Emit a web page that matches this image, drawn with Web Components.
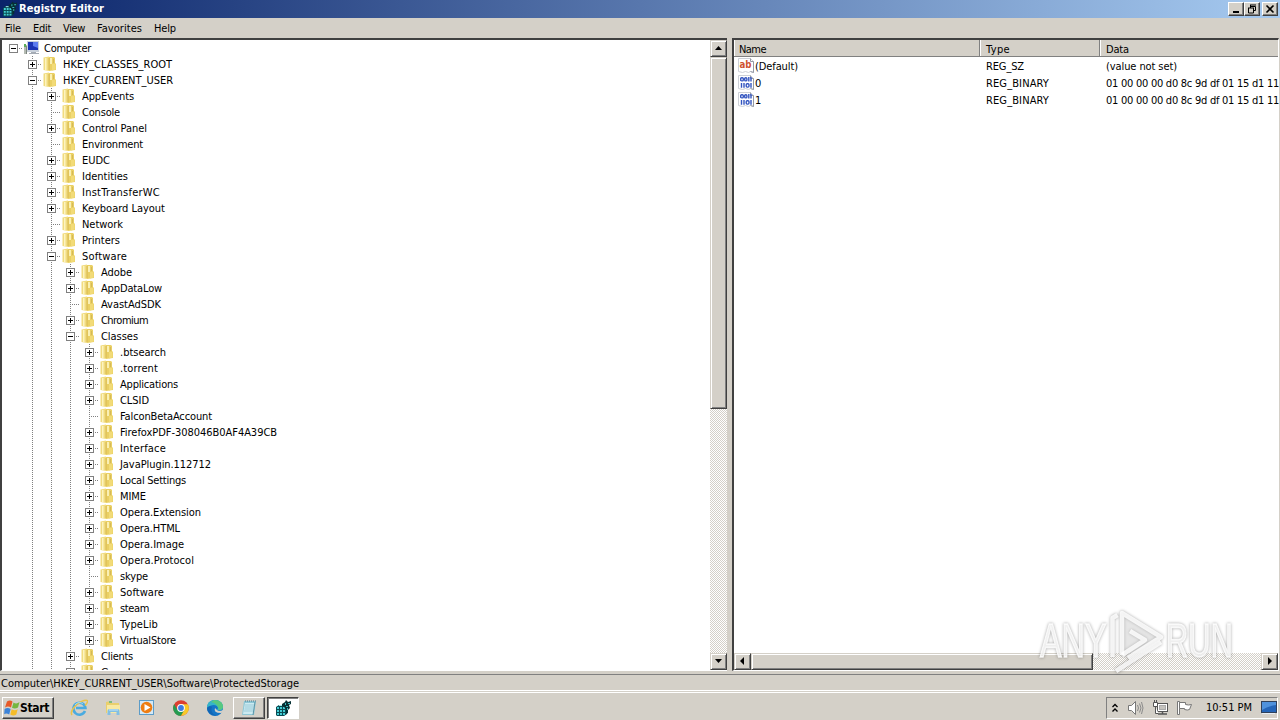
<!DOCTYPE html>
<html lang="en">
<head>
<meta charset="utf-8">
<title>Registry Editor</title>
<style>
  html, body { margin: 0; height: 100%; overflow: hidden; }
  body {
    --face: #d4d0c8;
    --shadow: #808080;
    --dark: #404040;
    background: #d4d0c8;
    color: #000;
    font: 11px/16px "DejaVu Sans Condensed", "DejaVu Sans", sans-serif;
    font-stretch: condensed;
    cursor: default;
  }
</style>
</head>
<body>
<reg-desktop></reg-desktop>

<script>
(function() {

const FOLDER = `<svg width="16" height="16" viewBox="0 0 16 16"><path d="M1.500 1.500L7 .5v14.500l-5.500-1z" fill="#f1dc80"/><path d="M3 2h1.500v12H3z" fill="#fdf4c0"/><path d="M7 1h5l1 1v5l1 1v6l-7 1z" fill="#ead064"/><path d="M8 2h2v6H8z" fill="#faf0b4"/><path d="M6.500 2h1v12h-1z" fill="#d8b850"/><path d="M10 8h3.500v5.500L10 14.500z" fill="#f2db78"/><path d="M11.500 3v4" stroke="#d4b95a"/></svg>`;

const COMPUTER = `<svg width="17" height="16" viewBox="0 0 17 16"><path d="M1 5h3v9H1z" fill="#b4bab2"/><path d="M1 4h2v3H1z" fill="#5cae5a"/><path d="M3.500 6v8" stroke="#7d867f"/><rect x="4" y="1" width="12" height="11" fill="#c9d1dc"/><rect x="5" y="2" width="10" height="8" fill="#1c35b4"/><path d="M10 2h5v6l-5-2z" fill="#5c7cf0"/><path d="M8 12h5v1h3v1H6v-1h2z" fill="#a5acb5"/></svg>`;

const REGEDIT = `<svg width="17" height="16" viewBox="0 0 17 16"><path d="M1 7l3-2h5l3 2v7l-3 2H2l-1-1z" fill="#0a4a52"/><path d="M2 7h2v2H2zM5 7h2v2H5zM8 7h2v2H8zM2 10h2v2H2zM5 10h2v2H5zM8 10h2v2H8zM2 13h2v2H2zM5 13h2v2H5zM8 13h2v2H8z" fill="#43cdd4"/><path d="M4 5h5v1H4z" fill="#a2f2f0"/><path d="M7 4l3-2 1-2 2 2 3-1v3l-2 1 1 3-2 2v3l-2 1V9L9 7 7 6z" fill="#063034"/><path d="M10 3h1v2h-1zM13 3h2v1h-2zM11 6h2v1h-2zM12 8h1v2h-1z" fill="#3fb9bd"/></svg>`;

const ICONS = {
  folder: FOLDER,
  computer: COMPUTER,
  regedit: REGEDIT,
  sz: `<svg width="17" height="16" viewBox="0 0 17 16"><path d="M.5.5h12l3 3v11l-3-1-2 1-3-1-3 1-4-1z" fill="#fff" stroke="#cdd0d6"/><path d="M12.500.5v3h3v11l-3-1" fill="none" stroke="#949aa6"/><text x="1.500" y="10" font-family="DejaVu Sans" font-size="10.500" font-weight="bold" fill="#cf5330" textLength="12" lengthAdjust="spacingAndGlyphs">ab</text></svg>`,
  bin: `<svg width="17" height="16" viewBox="0 0 17 16"><path d="M.5.5h12l3 3v11l-3-1-2 1-3-1-3 1-4-1z" fill="#fff" stroke="#cdd0d6"/><path d="M12.500.5v3h3v11l-3-1" fill="none" stroke="#949aa6"/><g fill="none" stroke="#3355c0" stroke-width="1.400"><rect x="2.700" y="2.700" width="2.600" height="3.200" rx="1"/><rect x="6.700" y="2.700" width="2.200" height="3.200" rx="1"/><path d="M10.800 2v4.500M13 2v4.500M3.500 8v4.800M6 8v4.800"/><rect x="8.200" y="8.700" width="2.800" height="3.400" rx="1"/><path d="M13 8v4.800"/></g></svg>`,
  ie: `<svg width="18" height="18" viewBox="0 0 18 18"><path d="M15 12a6 6 0 1 1 .4-3H6" fill="none" stroke="#4aabe0" stroke-width="2.600"/><path d="M2 16C-1 12 8 3 14 1.500s3 3 1 5" fill="none" stroke="#e8c34c" stroke-width="1.500"/><path d="M5 6c2-3 6-3 8-1" fill="none" stroke="#9ddcf8"/></svg>`,
  explorer: `<svg width="18" height="18" viewBox="0 0 18 18"><path d="M2 3l5-1 1 2h7v10H2z" fill="#e9cf6d"/><path d="M3 6h13v8H3z" fill="#f8e9a2"/><path d="M5 2h3v2H5z" fill="#7dbc7c"/><path d="M3.500 16v-4q0-2 2-2h8q2 0 2 2v4h-3v-3h-6v3z" fill="#83bfe3"/><path d="M5 11h9" stroke="#c8e7f7"/></svg>`,
  media: `<svg width="18" height="18" viewBox="0 0 18 18"><rect x="1.500" y="1.500" width="14" height="14" fill="#d5e9f6" stroke="#5c9cc8"/><circle cx="8.500" cy="8.500" r="5.800" fill="#ee7d12"/><path d="M6.500 5l6 3.500-6 3.500z" fill="#fff"/></svg>`,
  chrome: `<svg width="18" height="18" viewBox="0 0 18 18"><circle cx="9" cy="9" r="7.800" fill="#dc3e31"/><path d="M2.200 5.100A7.800 7.800 0 0 0 9 16.800L12.500 11 9 9 5.500 11z" fill="#259b51"/><path d="M9 5.200h6.900A7.800 7.800 0 0 1 9 16.800l3.500-6z" fill="#f8c928"/><circle cx="9" cy="9" r="3.900" fill="#fff"/><circle cx="9" cy="9" r="2.900" fill="#3d7be2"/></svg>`,
  edge: `<svg width="18" height="18" viewBox="0 0 18 18"><circle cx="9" cy="9" r="8" fill="#1475c7"/><path d="M1 9C1 3 5 1 9 1c5 0 8 3 8 7 0 3-3 4-6 3l1-2c0-3-6-5-11 0z" fill="#35b5c8"/><path d="M8 1c6 0 9 3 9 7 0 2-2 3-4 3-2-6-4-7-8-8z" fill="#58c880"/><path d="M6 8c-2 5 2 9 6 8-5 2-11-2-11-7 1-2 4-2 5-1z" fill="#1166b5"/><path d="M9 9q-2 5 6 5l2-1v-2q-4 2-6 0z" fill="#d4d0c8"/></svg>`,
  notepad: `<svg width="18" height="18" viewBox="0 0 18 18"><path d="M4 2h12l-2 14H2z" fill="#8fc7d6"/><path d="M5 4h10l-2 11H3z" fill="#cdeaf1"/><path d="M5 6h9M5 8h9M4.500 10h9M4 12h9" stroke="#9bcbd9"/><path d="M5 2h11" stroke="#567988" stroke-dasharray="1 1"/><path d="M15 3l-2 13" stroke="#5a95a8"/></svg>`,
  windows: `<svg width="16" height="16" viewBox="0 0 16 16"><path d="M3 1.500q3-2 5.500 0L7 7.500q-3-2-6 0z" fill="#e75a28"/><path d="M9.500 2.500q3 2 6-.500L14 7.500q-3 2-6 .300z" fill="#75b640"/><path d="M.6 9q3-2 6 0L5.200 14.500q-3-2-5-.3z" fill="#3c83d8"/><path d="M7.700 9.300q3 2 6 0L12.300 14.500q-3 2-6 0z" fill="#f5bc28"/></svg>`,
  chevrons: `<svg width="8" height="12" viewBox="0 0 8 12"><path d="M1.500 5L4 2.500 6.500 5M1.500 9.500L4 7l2.500 2.500" fill="none" stroke="#000" stroke-width="1.300"/></svg>`,
  sound: `<svg width="17" height="16" viewBox="0 0 17 16"><path d="M1.500 5.500h3l4-4v13l-4-4h-3z" fill="#fff" stroke="#777"/><path d="M10.500 5q2 3 0 6M12.500 3.500q3 4.500 0 9M14.500 2q3 6 0 12" fill="none" stroke="#8a8a8a"/></svg>`,
  network: `<svg width="17" height="16" viewBox="0 0 17 16"><rect x="5.500" y="3.500" width="10" height="8" fill="#fff" stroke="#555"/><rect x="7.500" y="5.500" width="6" height="4" fill="#c5c3be" stroke="#aaa"/><path d="M6 14h9M10.500 12v2" stroke="#555" stroke-width="1.500"/><path d="M1.500 2.500h4v4h-4zM3.500 6.500v7h3" fill="#fff" stroke="#555"/><path d="M2.500 0v2M4.500 0v2" stroke="#555"/></svg>`,
  flag: `<svg width="17" height="16" viewBox="0 0 17 16"><path d="M1.500 1.500h2v13h-2z" fill="#fff" stroke="#777"/><path d="M3.500 2.500h6v2q3 1 6 0l-2 5q-2 1-5 0v-1h-5z" fill="#fff" stroke="#777"/></svg>`,
  desktop: `<svg width="16" height="14" viewBox="0 0 16 14"><rect x=".5" y=".5" width="15" height="11" fill="#2465b8" stroke="#30415a"/><path d="M1 1h14v3Q7 5 1 9z" fill="#4f92dc"/><path d="M1 12.500h13" stroke="#e6edf5"/></svg>`
};

// base class: every element stamps its own template into an open root
class RegElement extends HTMLElement {
  constructor() {
    super();
    this._root = this.attachShadow({mode: 'open'});
  }
  stamp(html) {
    const t = document.createElement('template');
    t.innerHTML = html;
    this._root.appendChild(t.content.cloneNode(true));
  }
}

class RegIcon extends RegElement {
  connectedCallback() {
    this.stamp(`<style>:host{display:inline-flex;flex:none} svg{display:block}</style>${ICONS[this.getAttribute('name')]}`);
  }
}

// Label with a fixed advance width, tracking is derived from the measured text
class RegLabel extends RegElement {
  connectedCallback() {
    const text = this.textContent;
    const w = +this.getAttribute('w');
    this.stamp(`<style>:host{display:inline-block;flex:none;white-space:pre}</style><span><slot></slot></span>`);
    if (!w) return;
    const span = this._root.querySelector('span');
    const real = span.getBoundingClientRect().width;
    span.style.letterSpacing = ((w - real) / text.length).toFixed(3) + 'px';
  }
}

class TitleBar extends RegElement {
  connectedCallback() {
    this.stamp(`
    <style>
      :host { display: flex; align-items: center; height: 18px; padding: 0 2px; color: #fff; font-weight: bold; background: linear-gradient(to right, #0a246a, #a6caf0); }
      reg-icon { width: 16px; }
      reg-label { margin-left: 1px; flex: 1; line-height: 18px; }
      button { box-sizing: border-box; width: 16px; height: 14px; padding: 0; border: 1px solid; border-color: #fff var(--dark) var(--dark) #fff; box-shadow: inset -1px -1px var(--shadow); background: var(--face); }
      button:last-child { margin-left: 2px; }
      svg { display: block; }
      path { fill: none; stroke: #000; }
    </style>
    <reg-icon name="regedit"></reg-icon>
    <reg-label w="85">Registry Editor</reg-label>
    <button><svg width="14" height="12"><path d="M4 9h6" stroke-width="2"/></svg></button>
    <button><svg width="14" height="12"><path d="M5 2h6M5 3.500h5.500v4H9M5.500 2v3M3 5h6M3.500 5v5h5V5"/></svg></button>
    <button><svg width="14" height="12"><path d="M3.500 2.500l7 7M10.500 2.500l-7 7" stroke-width="1.600"/></svg></button>`);
  }
}

class MenuBar extends RegElement {
  connectedCallback() {
    this.stamp(`
    <style>
      :host { display: flex; height: 20px; line-height: 21px; padding-left: 5px; gap: 12px; background: var(--face); }
    </style>
    <reg-label w="16">File</reg-label><reg-label w="18">Edit</reg-label><reg-label w="22">View</reg-label><reg-label w="45">Favorites</reg-label><reg-label w="22">Help</reg-label>`);
  }
}

class TreeRow extends RegElement {
  connectedCallback() {
    const depth = +this.getAttribute('depth');
    const state = this.getAttribute('state');
    let guides = '';
    for (let i = 0; i < depth; i++) guides += i ? '<i class="v"></i>' : '<i></i>';
    const box = state ? `<svg width="9" height="9"><rect x=".5" y=".5" width="8" height="8" fill="#fff" stroke="#808080"/><path d="M2 4.500h5${state == '+' ? 'M4.500 2v5' : ''}" stroke="#000"/></svg>` : '';
    this.stamp(`
    <style>
      :host { display: flex; height: 16px; flex: none; }
      i { flex: none; width: 19px; height: 16px; display: flex; align-items: center; justify-content: center; }
      .v { background: repeating-linear-gradient(#808080 0 1px, transparent 1px 2px) 9px 0 / 1px 16px no-repeat; }
      .h { background: repeating-linear-gradient(to right, #808080 0 1px, transparent 1px 2px) 9px 8px / 10px 1px no-repeat; }
      .h.v { background: repeating-linear-gradient(#808080 0 1px, transparent 1px 2px) 9px 0 / 1px 16px no-repeat, repeating-linear-gradient(to right, #808080 0 1px, transparent 1px 2px) 9px 8px / 10px 1px no-repeat; }
      svg { display: block; margin-top: 1px; }
      reg-icon { width: 21px; }
      reg-label { line-height: 18px; }
    </style>
    ${guides}<i class="h ${depth ? 'v' : ''}">${box}</i>
    <reg-icon name="${depth ? 'folder' : 'computer'}"></reg-icon>
    <reg-label w="${this.getAttribute('w')}">${this.getAttribute('text')}</reg-label>`);
  }
}

class ScrollBar extends RegElement {
  connectedCallback() {
    const v = this.hasAttribute('vertical');
    const size = this.getAttribute('thumb');
    const a = v ? 'M4 9l3.500-4 3.500 4z' : 'M9 3L5 7l4 4z';
    const b = v ? 'M4 5h7L7.500 9z' : 'M6 3l4 4-4 4z';
    this.stamp(`
    <style>
      :host { display: flex; flex: none; flex-direction: ${v ? 'column' : 'row'}; ${v ? 'width' : 'height'}: 17px;
        background: repeating-conic-gradient(#fff 0 25%, #d4d0c8 0 50%) 0 0 / 2px 2px; }
      b { box-sizing: border-box; flex: none; width: 17px; height: 17px; background: var(--face);
        border: 1px solid; border-color: var(--face) var(--dark) var(--dark) var(--face);
        box-shadow: inset 1px 1px #fff, inset -1px -1px var(--shadow); }
      .thumb { ${v ? 'height' : 'width'}: ${size}px; }
      .gap { flex: 1; }
      svg { display: block; }
    </style>
    <b><svg width="15" height="15"><path d="${a}"/></svg></b><b class="thumb"></b><span class="gap"></span><b><svg width="15" height="15"><path d="${b}"/></svg></b>`);
  }
}

const TREE = [
  [0, '-', 'Computer', 47], [1, '+', 'HKEY_CLASSES_ROOT', 109], [1, '-', 'HKEY_CURRENT_USER', 110],
  [2, '+', 'AppEvents', 52], [2, '', 'Console', 38], [2, '+', 'Control Panel', 65], [2, '', 'Environment', 61],
  [2, '+', 'EUDC', 28], [2, '+', 'Identities', 46], [2, '+', 'InstTransferWC', 78], [2, '+', 'Keyboard Layout', 83],
  [2, '', 'Network', 41], [2, '+', 'Printers', 38], [2, '-', 'Software', 45],
  [3, '+', 'Adobe', 31], [3, '+', 'AppDataLow', 61], [3, '', 'AvastAdSDK', 60], [3, '+', 'Chromium', 47], [3, '-', 'Classes', 37],
  [4, '+', '.btsearch', 46], [4, '+', '.torrent', 38], [4, '+', 'Applications', 58], [4, '+', 'CLSID', 29],
  [4, '', 'FalconBetaAccount', 92], [4, '+', 'FirefoxPDF-308046B0AF4A39CB', 157], [4, '+', 'Interface', 46],
  [4, '+', 'JavaPlugin.112712', 91], [4, '+', 'Local Settings', 66], [4, '+', 'MIME', 26], [4, '+', 'Opera.Extension', 81],
  [4, '+', 'Opera.HTML', 60], [4, '+', 'Opera.Image', 64], [4, '+', 'Opera.Protocol', 74], [4, '', 'skype', 28],
  [4, '+', 'Software', 44], [4, '+', 'steam', 29], [4, '+', 'TypeLib', 38], [4, '+', 'VirtualStore', 56],
  [3, '+', 'Clients', 32], [3, '+', 'Google', 36]
];

class KeyTree extends RegElement {
  connectedCallback() {
    this.stamp(`
    <style>
      :host { display: flex; box-sizing: border-box; width: 727px; flex: none; background: #fff; border: solid; border-width: 2px 0 1px 2px; border-color: var(--dark) #fff #fff var(--dark); }
      .rows { flex: 1; min-width: 0; overflow: hidden; padding-left: 2px; display: flex; flex-direction: column; }
    </style>
    <div class="rows">${TREE.map(r => `<tree-row depth="${r[0]}" state="${r[1]}" text="${r[2]}" w="${r[3]}"></tree-row>`).join('')}</div>
    <reg-scroll vertical thumb="352"></reg-scroll>`);
  }
}

class ValueList extends RegElement {
  connectedCallback() {
    const hex = '01 00 00 00 d0 8c 9d df 01 15 d1 11';
    const rows = [
      ['sz', '(Default)', 43, 'REG_SZ', 38, '(value not set)', 71],
      ['bin', '0', 6, 'REG_BINARY', 63, hex, 173],
      ['bin', '1', 6, 'REG_BINARY', 63, hex, 173]
    ];
    this.stamp(`
    <style>
      :host { display: flex; flex-direction: column; flex: 1; min-width: 0; box-sizing: border-box; background: #fff; border: solid; border-width: 2px 1px 1px 2px; border-color: var(--dark) #fff #fff var(--dark); }
      .head, .row { display: grid; grid-template-columns: 246px 120px 1fr; flex: none; }
      .head { height: 17px; }
      .head div { box-sizing: border-box; height: 17px; padding-left: 6px; line-height: 20px; background: var(--face); border: 1px solid var(--shadow); border-width: 0 1px 1px 0; box-shadow: inset 1px 0 #fff; }
      .head div:first-child { padding-left: 5px; }
      .head div:last-child { border-right: 0; }
      .row { height: 17px; line-height: 18px; }
      .row > * { padding-left: 6px; }
      .row > .name { display: flex; padding-left: 4px; }
      reg-icon { width: 17px; }
      .body { flex: 1; padding-top: 1px; }
    </style>
    <div class="head"><div><reg-label w="27">Name</reg-label></div><div><reg-label w="24">Type</reg-label></div><div><reg-label w="23">Data</reg-label></div></div>
    <div class="body">${rows.map(r => `<div class="row"><div class="name"><reg-icon name="${r[0]}"></reg-icon><reg-label w="${r[2]}">${r[1]}</reg-label></div><div><reg-label w="${r[4]}">${r[3]}</reg-label></div><div><reg-label w="${r[6]}">${r[5]}</reg-label></div></div>`).join('')}</div>
    <reg-scroll thumb="342"></reg-scroll>`);
  }
}

class StatusBar extends RegElement {
  connectedCallback() {
    this.stamp(`
    <style>
      :host { display: block; box-sizing: border-box; height: 17px; margin-top: 3px; line-height: 17px; padding-left: 1px; border: solid; border-width: 1px 0; border-color: var(--shadow) #fff #fff; background: var(--face); }
    </style>
    <reg-label w="298">${this.getAttribute('path')}</reg-label>`);
  }
}

class TaskBar extends RegElement {
  connectedCallback() {
    this.stamp(`
    <style>
      :host { display: flex; align-items: center; box-sizing: border-box; height: 28px; padding: 2px 2px 0; border-top: 1px solid #fff; background: var(--face); }
      .btn { box-sizing: border-box; display: flex; align-items: center; justify-content: center; height: 22px; border: 1px solid; border-color: #fff var(--dark) var(--dark) #fff; box-shadow: inset -1px -1px var(--shadow); }
      .start { width: 52px; font-weight: bold; font-size: 12px; justify-content: flex-start; padding-left: 1px; }
      .quick { display: flex; gap: 16px; margin: 0 9px 0 16px; }
      .app { width: 32px; margin-right: 2px; }
      .on { background: #fff; border-color: var(--dark) #fff #fff var(--dark); box-shadow: inset 1px 1px var(--shadow); }
      .tray { display: flex; align-items: center; box-sizing: border-box; width: 172px; height: 22px; margin-left: auto; padding: 0 1px 0 4px; border: 1px solid; border-color: var(--shadow) #fff #fff var(--shadow); }
      .tray reg-icon { margin-right: 8px; }
      .tray reg-icon:nth-child(3) { margin-right: 7px; }
      .tray reg-label { margin: 0 9px 0 5px; }
      .tray reg-icon:last-child { margin: 0; }
    </style>
    <div class="btn start"><reg-icon name="windows"></reg-icon><reg-label w="29">Start</reg-label></div>
    <div class="quick"><reg-icon name="ie"></reg-icon><reg-icon name="explorer"></reg-icon><reg-icon name="media"></reg-icon><reg-icon name="chrome"></reg-icon><reg-icon name="edge"></reg-icon></div>
    <div class="btn app"><reg-icon name="notepad"></reg-icon></div>
    <div class="btn app on"><reg-icon name="regedit"></reg-icon></div>
    <div class="tray"><reg-icon name="chevrons"></reg-icon><reg-icon name="sound"></reg-icon><reg-icon name="network"></reg-icon><reg-icon name="flag"></reg-icon><reg-label w="46">10:51 PM</reg-label><reg-icon name="desktop"></reg-icon></div>`);
  }
}

class WaterMark extends RegElement {
  connectedCallback() {
    this.stamp(`
    <style>
      :host { position: absolute; left: 1030px; top: 604px; pointer-events: none; }
      svg { display: block; filter: drop-shadow(0 0 1.500px rgba(0,0,0,.4)); }
      text { font-family: "Liberation Sans", sans-serif; font-size: 49px; fill: #fff; fill-opacity: .8; stroke: #fff; stroke-opacity: .8; stroke-width: 1.500px; }
      path { fill: none; stroke: #fff; stroke-opacity: .85; stroke-width: 4.500px; stroke-linejoin: round; }
      .face { fill: #e4e4e4; fill-opacity: .25; }
    </style>
    <svg width="220" height="76" viewBox="0 0 220 76">
      <text transform="translate(10 53) scale(.66 1)">ANY</text>
      <text transform="translate(136 53) scale(.63 1)">RUN</text>
      <path class="face" d="M92 51V9l39 24-33 21"/>
      <path d="M82.500 53V14l5-3M92 51l23-15-15-9M86 67l45-29"/>
    </svg>`);
  }
}

class RegDesktop extends RegElement {
  connectedCallback() {
    this.stamp(`
    <style>
      :host { display: flex; flex-direction: column; width: 1280px; height: 720px; position: relative; overflow: hidden; background: var(--face); }
      main { display: flex; height: 633px; gap: 5px; padding-right: 1px; }
      task-bar { margin-top: auto; }
    </style>
    <title-bar></title-bar>
    <menu-bar></menu-bar>
    <main><key-tree></key-tree><value-list></value-list></main>
    <status-bar path="Computer\\HKEY_CURRENT_USER\\Software\\ProtectedStorage"></status-bar>
    <task-bar></task-bar>
    <water-mark></water-mark>`);
  }
}

customElements.define('reg-icon', RegIcon);
customElements.define('reg-label', RegLabel);
customElements.define('reg-scroll', ScrollBar);
customElements.define('title-bar', TitleBar);
customElements.define('menu-bar', MenuBar);
customElements.define('tree-row', TreeRow);
customElements.define('key-tree', KeyTree);
customElements.define('value-list', ValueList);
customElements.define('status-bar', StatusBar);
customElements.define('task-bar', TaskBar);
customElements.define('water-mark', WaterMark);
customElements.define('reg-desktop', RegDesktop);
})();
</script>
</body>
</html>
